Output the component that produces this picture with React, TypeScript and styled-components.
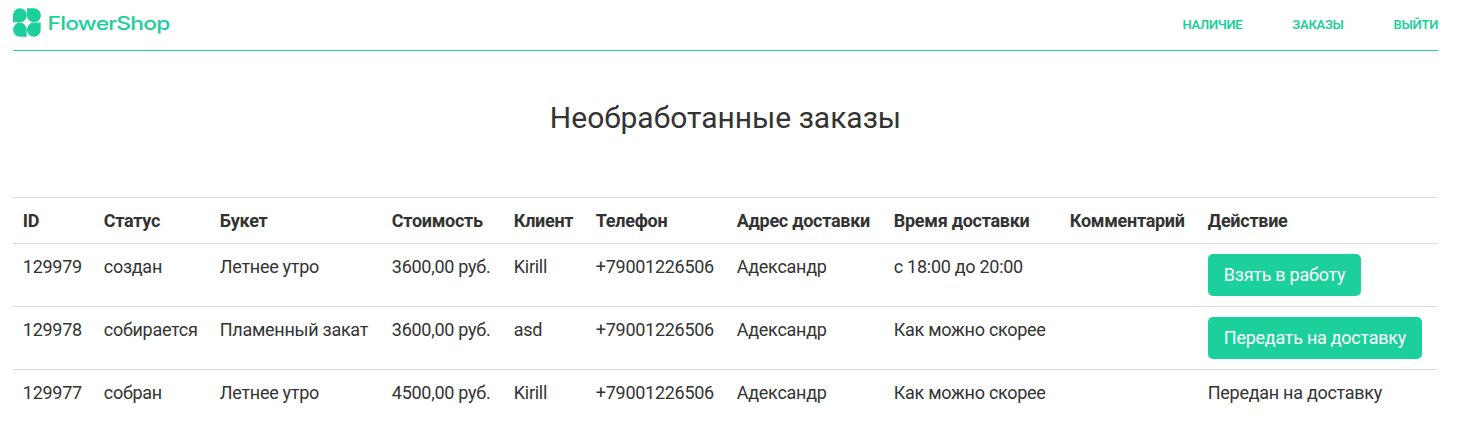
import React from 'react';
import styled, { createGlobalStyle } from 'styled-components';

const Global = createGlobalStyle`
  *, *::before, *::after { box-sizing: border-box; }
  body { margin: 0; background: #fff; color: #333; font-family: Roboto, "Liberation Sans", sans-serif; font-size: 18px; line-height: 25px; overflow: hidden; }
`;
const Page = styled.div`width: 1425px; margin-left: 13px;`;
const Header = styled.header`height: 51px; display: flex; align-items: center; justify-content: space-between; border-bottom: 1px solid #1bd09a; padding-bottom: 4px;`;
const Brand = styled.a`display: flex; color: #1bd09a;`;
const Nav = styled.nav`display: flex; gap: 50px;`;
const NavLink = styled.a`color: #1bd09a; font-size: 13px; font-weight: 600; line-height: 20px; letter-spacing: -0.28px; text-transform: uppercase; margin-top: 3px;`;
const Title = styled.h1`margin: 49px 0 61px; text-align: center; font-size: 30px; font-weight: 400; line-height: 36px; letter-spacing: -0.02px;`;
const Table = styled.table`width: 100%; border-collapse: collapse; table-layout: fixed; letter-spacing: -0.28px;`;
const Row = styled.tr<{ $h: number }>`height: ${p => p.$h}px; border-top: 1px solid #dcdcdc;`;
const Head = styled.th`padding: 10px 0 10px 9.8px; text-align: left; font-weight: 700; white-space: nowrap; vertical-align: top;`;
const Cell = styled.td`padding: 10px 0 10px 9.8px; white-space: nowrap; vertical-align: top;`;
const Button = styled.button`display: block; height: 42px; padding: 0 16px; border: 0; border-radius: 5px; background: #1bd09a; color: #fff; font: 450 18px/42px Roboto, sans-serif; letter-spacing: -0.26px;`;

const Logo = () => (
  <svg width="160" height="30" viewBox="0 0 160 30" fill="currentColor">
    <path d="M0 14.3V7.1A6.9 6.9 0 0 1 13.8 7.1A7 7.2 0 0 1 6.8 14.3Z" />
    <path d="M13.9 0.3H20.7A7 7 0 1 1 13.9 7.3Z" />
    <path d="M13.7 28.8H6.8A6.8 7.1 0 1 1 13.7 21.7Z" />
    <path d="M27.7 14.6V21.7A6.9 7.1 0 1 1 20.8 14.6Z" />
    <text transform="translate(34.6 22.2) scale(1.24 1)" fontFamily="Inter, sans-serif" fontSize="18.4" fontWeight="450" textLength="99" lengthAdjust="spacing">FlowerShop</text>
  </svg>
);
const widths = [81, 116, 172, 122, 82, 141, 157, 176, 138, 240];
const heads = ['ID', 'Статус', 'Букет', 'Стоимость', 'Клиент', 'Телефон', 'Адрес доставки', 'Время доставки', 'Комментарий', 'Действие'];
const orders = [
  { cells: ['129979', 'создан', 'Летнее утро', '3600,00 руб.', 'Kirill', '+79001226506', 'Адександр', 'с 18:00 до 20:00', ''], action: 'Взять в работу', button: true },
  { cells: ['129978', 'собирается', 'Пламенный закат', '3600,00 руб.', 'asd', '+79001226506', 'Адександр', 'Как можно скорее', ''], action: 'Передать на доставку', button: true },
  { cells: ['129977', 'собран', 'Летнее утро', '4500,00 руб.', 'Kirill', '+79001226506', 'Адександр', 'Как можно скорее', ''], action: 'Передан на доставку', button: false },
];

export default function App() {
  return (
    <Page>
      <Global />
      <Header>
        <Brand><Logo /></Brand>
        <Nav>{['Наличие', 'Заказы', 'Выйти'].map(t => <NavLink key={t}>{t}</NavLink>)}</Nav>
      </Header>
      <Title>Необработанные заказы</Title>
      <Table>
        <colgroup>{widths.map((w, i) => <col key={i} width={w} />)}</colgroup>
        <thead><Row $h={46}>{heads.map(t => <Head key={t}>{t}</Head>)}</Row></thead>
        <tbody>
          {orders.map(o => (
            <Row key={o.cells[0]} $h={63}>
              {o.cells.map((c, i) => <Cell key={i}>{c}</Cell>)}
              <Cell>{o.button ? <Button>{o.action}</Button> : o.action}</Cell>
            </Row>
          ))}
        </tbody>
      </Table>
    </Page>
  );
}
